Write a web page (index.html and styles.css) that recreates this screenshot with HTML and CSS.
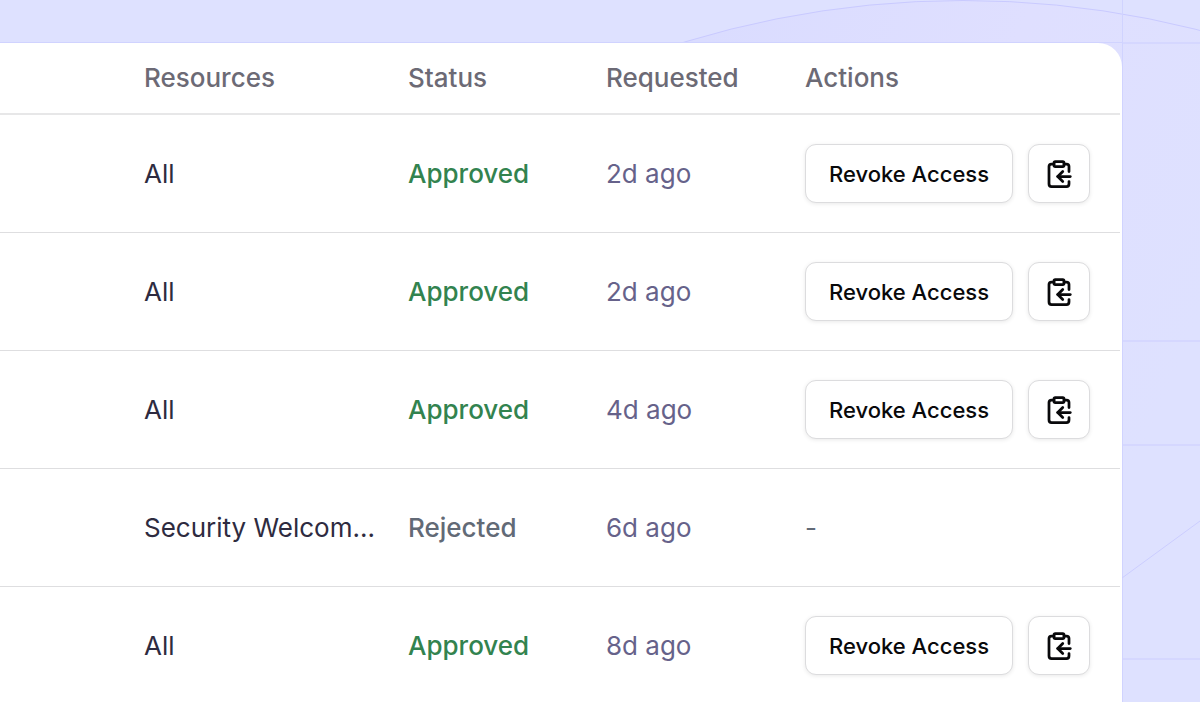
FILE: index.html
```html
<!DOCTYPE html>
<html lang="en">
<head>
    <meta charset="UTF-8">
    <meta name="viewport" content="width=device-width, initial-scale=1">
    <title>Access requests</title>
    <link rel="stylesheet" href="styles.css">
</head>
<body>
    <svg class="backdrop" viewBox="0 0 1200 702" preserveAspectRatio="xMaxYMin slice" aria-hidden="true">
        <defs>
            <linearGradient id="glow" gradientUnits="userSpaceOnUse" x1="720" y1="0" x2="1240" y2="240">
                <stop offset="0" stop-color="#dadcff"/>
                <stop offset=".5" stop-color="#dfdfff"/>
                <stop offset="1" stop-color="#dee1ff"/>
            </linearGradient>
        </defs>
        <circle cx="963" cy="955" r="954.5" fill="url(#glow)" stroke="#c9caff"/>
        <path class="grid-line" d="M1122 43H1200M1122 341H1200M1122 445H1200M1122 659H1200"/>
        <path class="grid-edge" d="M0 42.5H1122M1122.5 0V702"/>
        <path class="grid-diagonal" d="M1122 578L1200 521"/>
    </svg>

    <!-- shared by the log buttons -->
    <svg class="sprite" width="0" height="0" aria-hidden="true">
        <symbol id="icon-clipboard" viewBox="0 0 24 24">
            <rect x="8" y="2" width="8" height="4" rx="1"/>
            <path d="M8 4H6a2 2 0 0 0-2 2v14a2 2 0 0 0 2 2h12a2 2 0 0 0 2-2v-2"/>
            <path d="M16 4h2a2 2 0 0 1 2 2v4"/>
            <path d="M21 14H11"/>
            <path d="m15 10-4 4 4 4"/>
        </symbol>
    </svg>

    <main class="card">
        <table class="requests">
            <colgroup>
                <col class="col-lead">
                <col class="col-resources">
                <col class="col-status">
                <col class="col-requested">
                <col class="col-actions">
            </colgroup>
            <thead>
                <tr>
                    <td></td>
                    <th scope="col">Resources</th>
                    <th scope="col">Status</th>
                    <th scope="col">Requested</th>
                    <th scope="col">Actions</th>
                </tr>
            </thead>
            <tbody>
                <tr>
                    <td></td>
                    <td>All</td>
                    <td class="approved">Approved</td>
                    <td class="time">2d ago</td>
                    <td>
                        <div class="actions">
                            <button type="button" class="btn">Revoke Access</button>
                            <button type="button" class="btn btn-icon" aria-label="Copy"><svg class="icon"><use href="#icon-clipboard"/></svg></button>
                        </div>
                    </td>
                </tr>
                <tr>
                    <td></td>
                    <td>All</td>
                    <td class="approved">Approved</td>
                    <td class="time">2d ago</td>
                    <td>
                        <div class="actions">
                            <button type="button" class="btn">Revoke Access</button>
                            <button type="button" class="btn btn-icon" aria-label="Copy"><svg class="icon"><use href="#icon-clipboard"/></svg></button>
                        </div>
                    </td>
                </tr>
                <tr>
                    <td></td>
                    <td>All</td>
                    <td class="approved">Approved</td>
                    <td class="time">4d ago</td>
                    <td>
                        <div class="actions">
                            <button type="button" class="btn">Revoke Access</button>
                            <button type="button" class="btn btn-icon" aria-label="Copy"><svg class="icon"><use href="#icon-clipboard"/></svg></button>
                        </div>
                    </td>
                </tr>
                <tr>
                    <td></td>
                    <td>Security Welcom...</td>
                    <td class="rejected">Rejected</td>
                    <td class="time">6d ago</td>
                    <td class="none">-</td>
                </tr>
                <tr>
                    <td></td>
                    <td>All</td>
                    <td class="approved">Approved</td>
                    <td class="time">8d ago</td>
                    <td>
                        <div class="actions">
                            <button type="button" class="btn">Revoke Access</button>
                            <button type="button" class="btn btn-icon" aria-label="Copy"><svg class="icon"><use href="#icon-clipboard"/></svg></button>
                        </div>
                    </td>
                </tr>
            </tbody>
        </table>
    </main>
</body>
</html>
```
FILE: styles.css
```css
*{box-sizing:border-box;}
body{
    display: flex;
    flex-direction: column;
    height: 100vh;
    margin: 0;
    padding: 43px 78px 0 0;
    overflow: hidden;
    background-color: #dee1ff;
    color: #2e2b40;
    font-family: Inter, "Liberation Sans", sans-serif;
    font-size: 26px;
    line-height: 32px;
    font-optical-sizing: none;
}

.backdrop{
    position: absolute;
    top: 0;
    left: 0;
    z-index: -1;
    width: 100%;
    height: 100%;
    fill: none;
}
.grid-line{stroke: #d5d7ff;stroke-width: 2;}
.grid-edge{stroke: #d0d3ff;}
.grid-diagonal{stroke: #cccdff;}
.sprite{position: absolute;}

.card{
    flex: 1;
    padding-right: 2px;
    border-radius: 0 24px 0 0;
    background-color: #fff;
}

.requests{
    width: 100%;
    table-layout: fixed;
    border-collapse: separate;
    border-spacing: 0;
}
.col-lead{width: 128px;}
.col-resources{width: 264px;}
.col-status{width: 198px;}
.col-requested{width: 199px;}

.requests th,
.requests td{
    padding: 0 16px;
    text-align: left;
    white-space: nowrap;
}
.requests thead th,
.requests thead td{
    height: 72px;
    border-bottom: 2px solid #e7e7e8;
    color: #6c6a75;
    font-weight: 500;
}
.requests tbody td{
    height: 118px;
    border-bottom: 1px solid #dedee0;
}
.requests .approved{color: #32834f;font-weight: 500;}
.requests .rejected{color: #626a76;font-weight: 500;}
.requests .time{color: #66628a;}
.requests .none{color: #626a76;}

.actions{
    display: flex;
    gap: 15px;
}
.btn{
    height: 59px;
    padding: 0 23px;
    border: 1px solid #dcdcde;
    border-radius: 11px;
    background-color: #fff;
    box-shadow: 0 1px 4px rgba(0,0,0,.09);
    color: #09090b;
    font: inherit;
    font-size: 22px;
    font-weight: 500;
    cursor: pointer;
}
.btn-icon{
    display: flex;
    align-items: center;
    justify-content: center;
    width: 62px;
    padding: 0;
}
.icon{
    width: 30px;
    height: 30px;
    fill: none;
    stroke: currentColor;
    stroke-width: 2.2;
    stroke-linecap: round;
    stroke-linejoin: round;
}
```
